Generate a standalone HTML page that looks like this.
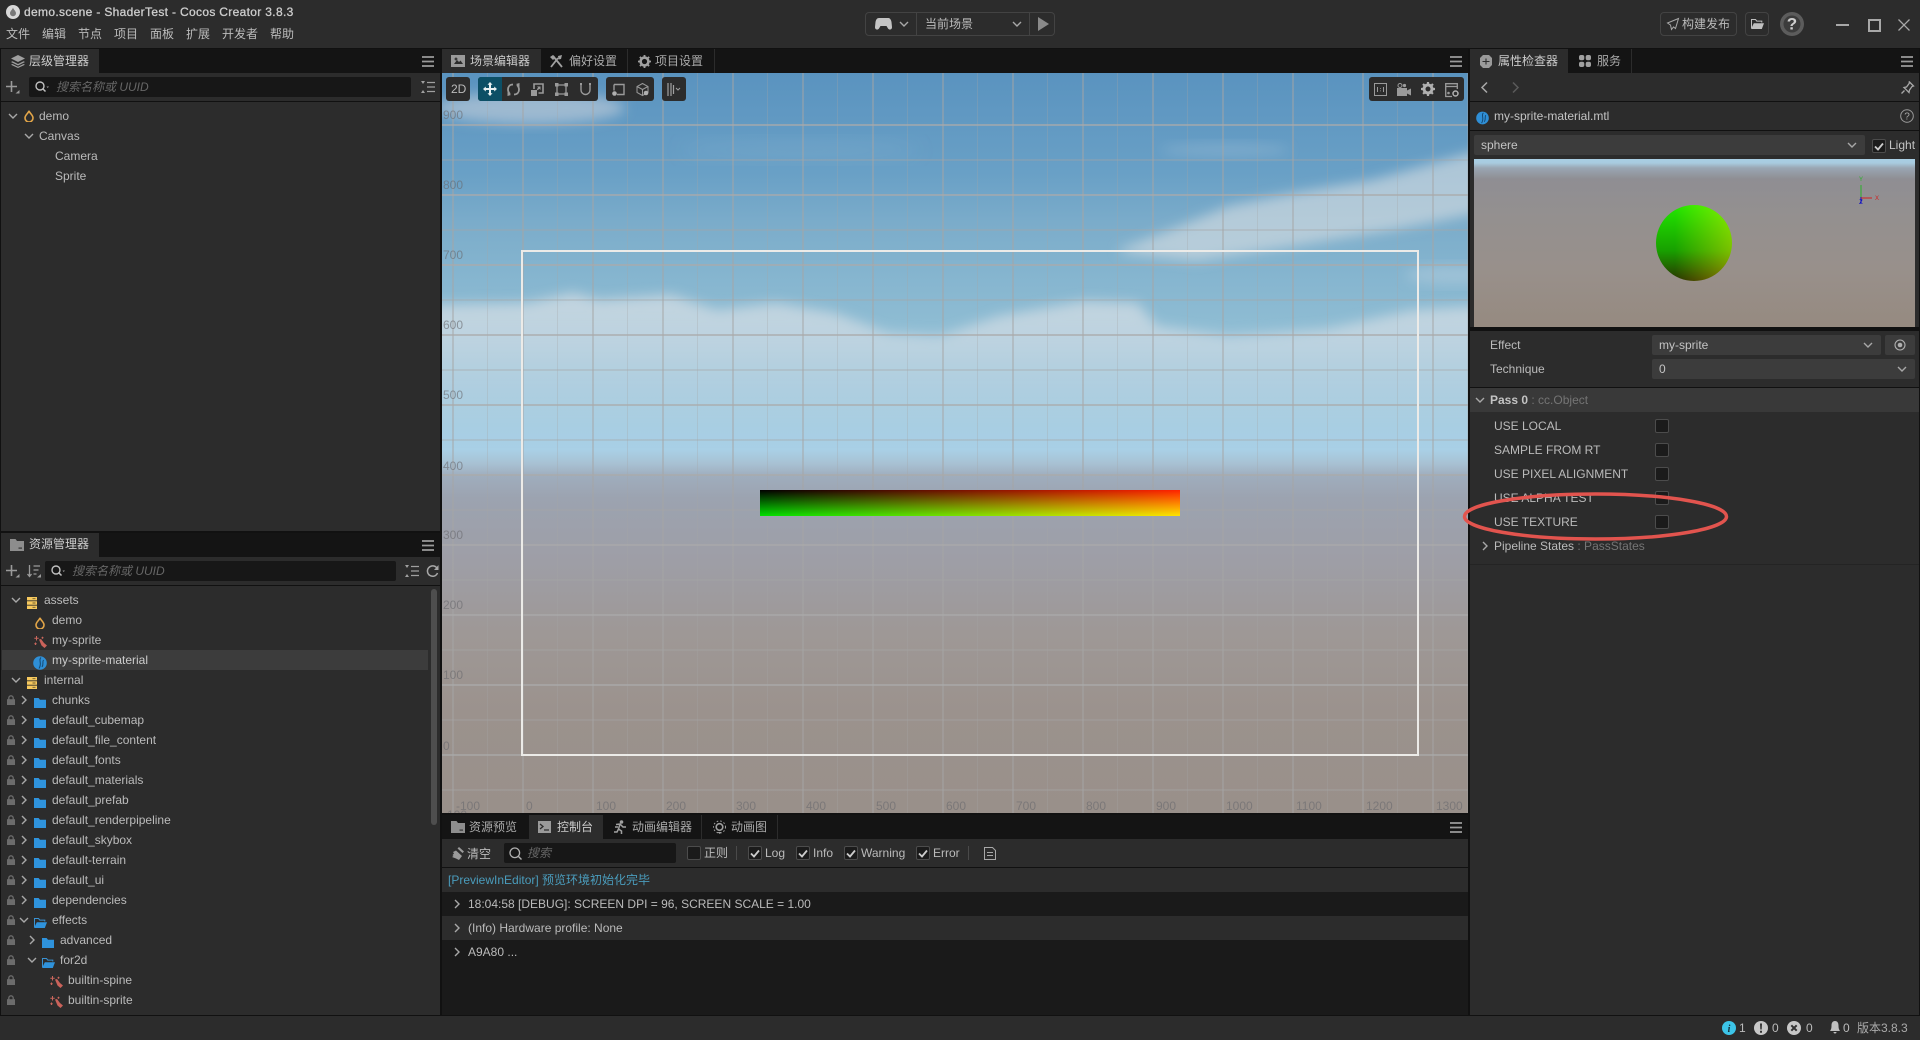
<!DOCTYPE html>
<html><head><meta charset="utf-8"><title>demo.scene - ShaderTest - Cocos Creator 3.8.3</title>
<style>
html,body{margin:0;padding:0;background:#111;width:1920px;height:1040px;overflow:hidden}
body{position:relative;font:12px/16px "Liberation Sans","Noto Sans CJK SC",sans-serif;color:#bbb}
.a,.t,.i{position:absolute}
.t{white-space:nowrap}
.i{overflow:visible}
.p{position:absolute;background:#2c2c2c}
.tb{position:absolute;background:#141414;height:24px}
.ph{color:#666;font-style:italic}
.g{color:#757575}
.b{position:absolute;background:#2c2c2c;border-radius:3px;top:77px;height:24px}
.sel{position:absolute;background:#3c3c3c;border-radius:2px;height:20px}
.cb{position:absolute;width:12px;height:12px;background:#1b1b1b;border:1px solid #4c4c4c;border-radius:2px}
.l{position:absolute;color:rgba(105,105,110,.62)}
.lb{position:absolute;top:798px}
</style></head><body>
<svg width="0" height="0" style="position:absolute">
<defs>
<symbol id="cd" viewBox="0 0 10 6"><path d="M1 1l4 4 4-4" fill="none" stroke="#a8a8a8" stroke-width="1.4"/></symbol>
<symbol id="cr" viewBox="0 0 6 10"><path d="M1 1l4 4-4 4" fill="none" stroke="#a8a8a8" stroke-width="1.4"/></symbol>
<symbol id="lock" viewBox="0 0 8 10"><path d="M0 4.200h8V10H0z" fill="#6c6c6c"/><path d="M1.800 4.500V3a2.200 2.200 0 0 1 4.400 0v1.500" fill="none" stroke="#6c6c6c" stroke-width="1.300"/></symbol>
<symbol id="fo" viewBox="0 0 12 10"><path d="M0 0h4.600l1.400 1.800h6V10H0z" fill="#2f93dc"/></symbol>
<symbol id="fopen" viewBox="0 0 13 10"><path d="M.5 9V.5h4l1.300 1.600h5v1.400" fill="none" stroke="#3a92d2"/><path d="M2.800 4.200H13L10.800 10H0z" fill="#2f93dc"/></symbol>
<symbol id="fopeng" viewBox="0 0 13 10"><path d="M.5 9V.5h4l1.300 1.600h5v1.400" fill="none" stroke="#c0c0c0"/><path d="M2.800 4.200H13L10.800 10H0z" fill="#c0c0c0"/></symbol>
<symbol id="db" viewBox="0 0 10 12"><path d="M0 0h10v3.400H0zM0 4.300h10v3.400H0zM0 8.600h10V12H0z" fill="#f6c95e"/><path d="M5.500 1.700h3M5.500 6h3M5.500 10.300h3" stroke="#6d5a2a" stroke-width=".9"/></symbol>
<symbol id="fl" viewBox="0 0 10 12"><path d="M5 .8C5.400 3 9 5 9 8a4 4 0 0 1-8 0c0-3 3.600-5 4-7.200z" fill="none" stroke="#e2a548" stroke-width="1.600"/></symbol>
<symbol id="fx" viewBox="0 0 13 12"><path d="M2.500 0v4.500M.3 2.200h4.400M1.500 6.500v2.500M.3 7.700h2.400M8.500 .8v2M7.500 1.800h2" stroke="#c9665c" fill="none"/><path d="M5 3.500L7 3l3 4 3 2.500L10.500 12 7.500 9.500z" fill="#c9625a"/></symbol>
<symbol id="mt" viewBox="0 0 14 14"><circle cx="7" cy="7" r="6.800" fill="#2f8fd6"/><path d="M8 1.500C5 4 9.500 7 6 12.500M10.500 4C9 6 11 8 9 11" fill="none" stroke="#15466e" stroke-width="1"/></symbol>
<symbol id="ham" viewBox="0 0 12 11"><path d="M0 1h12M0 5.500h12M0 10h12" stroke="#9a9a9a" stroke-width="1.800"/></symbol>
<symbol id="q" viewBox="0 0 14 12"><circle cx="5" cy="5" r="4" fill="none" stroke="#c0c0c0" stroke-width="1.400"/><path d="M8 8l2.500 2.500" stroke="#c0c0c0" stroke-width="1.500"/><path d="M11.500 5.500h2.500L12.700 7z" fill="#999"/></symbol>
<symbol id="plus" viewBox="0 0 14 13"><path d="M5.500 0v11M0 5.500h11" stroke="#9a9a9a" stroke-width="1.600"/><path d="M9.500 12.500h4V9z" fill="#9a9a9a"/></symbol>
<symbol id="lst" viewBox="0 0 14 12"><path d="M6 1.500h8M6 6h8M6 10.500h8" stroke="#a0a0a0" stroke-width="1.300"/><path d="M0 0h4L2 3zM0 12h4L2 9z" fill="#a0a0a0"/></symbol>
<symbol id="fg" viewBox="0 0 14 12"><path d="M0 0h5.500l1.500 2H14v10H0z" fill="#8d8d8d"/><path d="M8.500 8.500h3.500v1.200H8.500z" fill="#333"/></symbol>
</defs>
</svg>

<!-- title bar -->
<div class="a" style="left:0;top:0;width:1920px;height:48px;background:#2c2c2c"></div>
<svg class="i" style="left:6px;top:5px" width="14" height="14" viewBox="0 0 14 14"><circle cx="7" cy="7" r="7" fill="#d8d8d8"/><path d="M7 2.500C7.300 4.500 10 6 10 8.300a3 3 0 0 1-6 0C4 6 6.700 4.500 7 2.500z" fill="#777"/></svg>
<div class="t" style="left:24px;top:4px;color:#cdcdcd;letter-spacing:.33px;-webkit-text-stroke:.3px #cdcdcd">demo.scene - ShaderTest - Cocos Creator 3.8.3</div>
<div class="t" style="left:6px;top:26px">文件</div><div class="t" style="left:42px;top:26px">编辑</div><div class="t" style="left:78px;top:26px">节点</div><div class="t" style="left:114px;top:26px">项目</div><div class="t" style="left:150px;top:26px">面板</div><div class="t" style="left:186px;top:26px">扩展</div><div class="t" style="left:222px;top:26px">开发者</div><div class="t" style="left:270px;top:26px">帮助</div>

<div class="a" style="left:865px;top:12px;width:188px;height:22px;border:1px solid #434343;border-radius:4px"></div>
<div class="a" style="left:916px;top:13px;width:1px;height:22px;background:#434343"></div>
<div class="a" style="left:1029px;top:13px;width:1px;height:22px;background:#434343"></div>
<svg class="i" style="left:875px;top:18px" width="17" height="12" viewBox="0 0 17 12"><path d="M4 0h9c2 0 3 1.500 3.500 4l.5 5c.2 2.500-2.500 3.500-4 1.500L11.500 8h-6L4 10.500C2.500 12.500-.2 11.500 0 9l.5-5C1 1.500 2 0 4 0z" fill="#c4c4c4"/></svg>
<svg class="i" style="left:899px;top:21px" width="10" height="6"><use href="#cd"/></svg>
<div class="t" style="left:925px;top:16px">当前场景</div>
<svg class="i" style="left:1012px;top:21px" width="10" height="6"><use href="#cd"/></svg>
<svg class="i" style="left:1038px;top:17px" width="11" height="14"><path d="M0 0l11 7L0 14z" fill="#8a8a8a"/></svg>

<div class="a" style="left:1660px;top:12px;width:75px;height:22px;border:1px solid #434343;border-radius:4px"></div>
<svg class="i" style="left:1667px;top:18px" width="12" height="12" viewBox="0 0 12 12"><path d="M11.500.5L.5 5l3 2 1 4.500 2-2.500 2 1.500z" fill="none" stroke="#a8a8a8"/></svg>
<div class="t" style="left:1682px;top:16px">构建发布</div>
<div class="a" style="left:1745px;top:12px;width:22px;height:22px;border:1px solid #434343;border-radius:4px"></div>
<svg class="i" style="left:1751px;top:19px" width="13" height="10"><use href="#fopeng"/></svg>
<svg class="i" style="left:1780px;top:12px" width="24" height="24" viewBox="0 0 24 24"><circle cx="12" cy="12" r="12" fill="#5c5c5c"/><circle cx="12" cy="12" r="8.500" fill="#3c3c3c"/><text x="12" y="17.500" font-size="17" font-weight="bold" text-anchor="middle" fill="#cfcfcf" font-family="Liberation Sans">?</text></svg>
<div class="a" style="left:1836px;top:24px;width:13px;height:2px;background:#a8a8a8"></div>
<div class="a" style="left:1868px;top:19px;width:9px;height:9px;border:2px solid #a8a8a8"></div>
<svg class="i" style="left:1898px;top:19px" width="12" height="12"><path d="M.5.500l11 11M11.500.500l-11 11" stroke="#a8a8a8" stroke-width="1.300"/></svg>

<!-- hierarchy panel -->
<div class="p" style="left:1px;top:49px;width:439px;height:482px"></div>
<div class="tb" style="left:1px;top:49px;width:439px"></div>
<div class="a" style="left:1px;top:49px;width:98px;height:24px;background:#2c2c2c"></div>
<svg class="i" style="left:11px;top:55px" width="14" height="13" viewBox="0 0 14 13"><path d="M7 0l7 3.500-7 3.500L0 3.500z" fill="#a0a0a0"/><path d="M1.500 6.200L7 9l5.500-2.800L14 7l-7 3.500L0 7zM1.500 9L7 11.800 12.500 9l1.500.8L7 13 0 9.800z" fill="#a0a0a0"/></svg>
<div class="t" style="left:29px;top:53px;color:#ccc">层级管理器</div>
<svg class="i" style="left:422px;top:56px" width="12" height="11"><use href="#ham"/></svg>
<svg class="i" style="left:6px;top:81px" width="14" height="13"><use href="#plus"/></svg>
<div class="a" style="left:29px;top:77px;width:382px;height:20px;background:#171717;border-radius:2px"></div>
<svg class="i" style="left:35px;top:81px" width="14" height="12"><use href="#q"/></svg>
<div class="t ph" style="left:56px;top:79px">搜索名称或 UUID</div>
<svg class="i" style="left:421px;top:81px" width="14" height="12"><use href="#lst"/></svg>
<div class="a" style="left:1px;top:101px;width:439px;height:1px;background:#111"></div>
<svg class="i" style="left:8px;top:113px" width="10" height="6"><use href="#cd"/></svg>
<svg class="i" style="left:24px;top:110px" width="10" height="12"><use href="#fl"/></svg>
<div class="t" style="left:39px;top:108px">demo</div>
<svg class="i" style="left:24px;top:133px" width="10" height="6"><use href="#cd"/></svg>
<div class="t" style="left:39px;top:128px">Canvas</div>
<div class="t" style="left:55px;top:148px">Camera</div>
<div class="t" style="left:55px;top:168px">Sprite</div>

<!-- assets panel -->
<div class="p" style="left:1px;top:533px;width:439px;height:482px"></div>
<div class="tb" style="left:1px;top:533px;width:439px"></div>
<div class="a" style="left:1px;top:533px;width:98px;height:24px;background:#2c2c2c"></div>
<svg class="i" style="left:10px;top:539px" width="14" height="12"><use href="#fg"/></svg>
<div class="t" style="left:29px;top:536px;color:#ccc">资源管理器</div>
<svg class="i" style="left:422px;top:540px" width="12" height="11"><use href="#ham"/></svg>
<svg class="i" style="left:6px;top:565px" width="14" height="13"><use href="#plus"/></svg>
<svg class="i" style="left:27px;top:565px" width="14" height="13" viewBox="0 0 14 13"><path d="M2.500 0v11M.5 9l2 2.500L4.500 9M6.500 1H13M6.500 5h5M6.500 9h3" stroke="#9a9a9a" fill="none" stroke-width="1.300"/><path d="M10 12.500h4V9z" fill="#9a9a9a"/></svg>
<div class="a" style="left:45px;top:561px;width:351px;height:20px;background:#171717;border-radius:2px"></div>
<svg class="i" style="left:51px;top:565px" width="14" height="12"><use href="#q"/></svg>
<div class="t ph" style="left:72px;top:563px">搜索名称或 UUID</div>
<svg class="i" style="left:405px;top:565px" width="14" height="12"><use href="#lst"/></svg>
<svg class="i" style="left:426px;top:565px" width="13" height="13" viewBox="0 0 13 13"><path d="M11 3.200A5.200 5.200 0 1 0 11.500 8" fill="none" stroke="#a8a8a8" stroke-width="1.500"/><path d="M12.500 0v5h-4.500z" fill="#a8a8a8"/></svg>
<div class="a" style="left:1px;top:585px;width:439px;height:1px;background:#111"></div>
<div class="a" style="left:2px;top:650px;width:426px;height:20px;background:#3c3c3c"></div>
<div class="a" style="left:431px;top:589px;width:6px;height:236px;background:#4e4e4e;border-radius:3px"></div>

<svg class="i" style="left:11px;top:597px" width="10" height="6"><use href="#cd"/></svg>
<svg class="i" style="left:27px;top:597px" width="10" height="12"><use href="#db"/></svg>
<div class="t" style="left:44px;top:592px">assets</div>
<svg class="i" style="left:35px;top:617px" width="10" height="12"><use href="#fl"/></svg>
<div class="t" style="left:52px;top:612px">demo</div>
<svg class="i" style="left:34px;top:636px" width="13" height="12"><use href="#fx"/></svg>
<div class="t" style="left:52px;top:632px">my-sprite</div>
<svg class="i" style="left:33px;top:656px" width="14" height="14"><use href="#mt"/></svg>
<div class="t" style="left:52px;top:652px;color:#ccc">my-sprite-material</div>
<svg class="i" style="left:11px;top:677px" width="10" height="6"><use href="#cd"/></svg>
<svg class="i" style="left:27px;top:677px" width="10" height="12"><use href="#db"/></svg>
<div class="t" style="left:44px;top:672px">internal</div>

<svg class="i" style="left:7px;top:695px" width="8" height="10"><use href="#lock"/></svg><svg class="i" style="left:21px;top:695px" width="6" height="10"><use href="#cr"/></svg><svg class="i" style="left:34px;top:698px" width="12" height="10"><use href="#fo"/></svg><div class="t" style="left:52px;top:692px">chunks</div>
<svg class="i" style="left:7px;top:715px" width="8" height="10"><use href="#lock"/></svg><svg class="i" style="left:21px;top:715px" width="6" height="10"><use href="#cr"/></svg><svg class="i" style="left:34px;top:718px" width="12" height="10"><use href="#fo"/></svg><div class="t" style="left:52px;top:712px">default_cubemap</div>
<svg class="i" style="left:7px;top:735px" width="8" height="10"><use href="#lock"/></svg><svg class="i" style="left:21px;top:735px" width="6" height="10"><use href="#cr"/></svg><svg class="i" style="left:34px;top:738px" width="12" height="10"><use href="#fo"/></svg><div class="t" style="left:52px;top:732px">default_file_content</div>
<svg class="i" style="left:7px;top:755px" width="8" height="10"><use href="#lock"/></svg><svg class="i" style="left:21px;top:755px" width="6" height="10"><use href="#cr"/></svg><svg class="i" style="left:34px;top:758px" width="12" height="10"><use href="#fo"/></svg><div class="t" style="left:52px;top:752px">default_fonts</div>
<svg class="i" style="left:7px;top:775px" width="8" height="10"><use href="#lock"/></svg><svg class="i" style="left:21px;top:775px" width="6" height="10"><use href="#cr"/></svg><svg class="i" style="left:34px;top:778px" width="12" height="10"><use href="#fo"/></svg><div class="t" style="left:52px;top:772px">default_materials</div>
<svg class="i" style="left:7px;top:795px" width="8" height="10"><use href="#lock"/></svg><svg class="i" style="left:21px;top:795px" width="6" height="10"><use href="#cr"/></svg><svg class="i" style="left:34px;top:798px" width="12" height="10"><use href="#fo"/></svg><div class="t" style="left:52px;top:792px">default_prefab</div>
<svg class="i" style="left:7px;top:815px" width="8" height="10"><use href="#lock"/></svg><svg class="i" style="left:21px;top:815px" width="6" height="10"><use href="#cr"/></svg><svg class="i" style="left:34px;top:818px" width="12" height="10"><use href="#fo"/></svg><div class="t" style="left:52px;top:812px">default_renderpipeline</div>
<svg class="i" style="left:7px;top:835px" width="8" height="10"><use href="#lock"/></svg><svg class="i" style="left:21px;top:835px" width="6" height="10"><use href="#cr"/></svg><svg class="i" style="left:34px;top:838px" width="12" height="10"><use href="#fo"/></svg><div class="t" style="left:52px;top:832px">default_skybox</div>
<svg class="i" style="left:7px;top:855px" width="8" height="10"><use href="#lock"/></svg><svg class="i" style="left:21px;top:855px" width="6" height="10"><use href="#cr"/></svg><svg class="i" style="left:34px;top:858px" width="12" height="10"><use href="#fo"/></svg><div class="t" style="left:52px;top:852px">default-terrain</div>
<svg class="i" style="left:7px;top:875px" width="8" height="10"><use href="#lock"/></svg><svg class="i" style="left:21px;top:875px" width="6" height="10"><use href="#cr"/></svg><svg class="i" style="left:34px;top:878px" width="12" height="10"><use href="#fo"/></svg><div class="t" style="left:52px;top:872px">default_ui</div>
<svg class="i" style="left:7px;top:895px" width="8" height="10"><use href="#lock"/></svg><svg class="i" style="left:21px;top:895px" width="6" height="10"><use href="#cr"/></svg><svg class="i" style="left:34px;top:898px" width="12" height="10"><use href="#fo"/></svg><div class="t" style="left:52px;top:892px">dependencies</div>
<svg class="i" style="left:7px;top:915px" width="8" height="10"><use href="#lock"/></svg><svg class="i" style="left:19px;top:917px" width="10" height="6"><use href="#cd"/></svg><svg class="i" style="left:34px;top:918px" width="13" height="10"><use href="#fopen"/></svg><div class="t" style="left:52px;top:912px">effects</div>
<svg class="i" style="left:7px;top:935px" width="8" height="10"><use href="#lock"/></svg><svg class="i" style="left:29px;top:935px" width="6" height="10"><use href="#cr"/></svg><svg class="i" style="left:42px;top:938px" width="12" height="10"><use href="#fo"/></svg><div class="t" style="left:60px;top:932px">advanced</div>
<svg class="i" style="left:7px;top:955px" width="8" height="10"><use href="#lock"/></svg><svg class="i" style="left:27px;top:957px" width="10" height="6"><use href="#cd"/></svg><svg class="i" style="left:42px;top:958px" width="13" height="10"><use href="#fopen"/></svg><div class="t" style="left:60px;top:952px">for2d</div>
<svg class="i" style="left:7px;top:975px" width="8" height="10"><use href="#lock"/></svg><svg class="i" style="left:50px;top:976px" width="13" height="12"><use href="#fx"/></svg><div class="t" style="left:68px;top:972px">builtin-spine</div>
<svg class="i" style="left:7px;top:995px" width="8" height="10"><use href="#lock"/></svg><svg class="i" style="left:50px;top:996px" width="13" height="12"><use href="#fx"/></svg><div class="t" style="left:68px;top:992px">builtin-sprite</div>

<!-- scene header -->
<div class="tb" style="left:442px;top:49px;width:1026px"></div>
<div class="a" style="left:442px;top:49px;width:98px;height:24px;background:#2c2c2c"></div>
<div class="a" style="left:627px;top:49px;width:1px;height:24px;background:#2c2c2c"></div>
<div class="a" style="left:714px;top:49px;width:1px;height:24px;background:#2c2c2c"></div>
<div class="a" style="left:540px;top:49px;width:1px;height:24px;background:#2c2c2c"></div>
<svg class="i" style="left:451px;top:55px" width="14" height="12" viewBox="0 0 14 12"><path d="M0 0h14v12H0z" fill="#9a9a9a"/><path d="M3 9l3-4 2 2 1.500-1.500L12 9zM5 2l.7 1.300L7 4l-1.300.7L5 6l-.7-1.300L3 4l1.300-.7z" fill="#2c2c2c"/></svg>
<div class="t" style="left:470px;top:53px;color:#ccc">场景编辑器</div>
<svg class="i" style="left:550px;top:55px" width="13" height="13" viewBox="0 0 13 13"><path d="M1 12L8 3M3 1l9 11" stroke="#a0a0a0" stroke-width="1.800" fill="none"/><path d="M0 2l3-2 2.500 2.500L3 5zM8 1l4-1-1 4-2.500.5z" fill="#a0a0a0"/></svg>
<div class="t" style="left:569px;top:53px;color:#aaa">偏好设置</div>
<svg class="i" style="left:638px;top:55px" width="13" height="13" viewBox="0 0 14 14"><circle cx="7" cy="7" r="4.200" fill="none" stroke="#a0a0a0" stroke-width="2.800"/><path d="M7 0v14M0 7h14M2 2l10 10M12 2L2 12" stroke="#a0a0a0" stroke-width="2" stroke-dasharray="2.500 9"/></svg>
<div class="t" style="left:655px;top:53px;color:#aaa">项目设置</div>
<svg class="i" style="left:1450px;top:56px" width="12" height="11"><use href="#ham"/></svg>

<!-- scene view -->
<div class="a" id="sv" style="left:442px;top:73px;width:1026px;height:740px;overflow:hidden;background:linear-gradient(to bottom,#5a93bf 0,#69a0c6 100px,#7bacca 150px,#83b3ce 190px,#8ebcd3 250px,#a4cbe0 340px,#a9d0e6 377px,#a8c2d4 390px,#9fadbd 403px,#9ca3b0 425px,#9e9ea6 490px,#9e9896 560px,#9b928d 640px,#99908a 740px)">
<svg width="1026" height="740" viewBox="442 73 1026 740" style="position:absolute;left:0;top:0">
<defs>
<filter id="bl" x="-10%" y="-30%" width="120%" height="160%"><feGaussianBlur stdDeviation="6"/></filter>
<filter id="bl2" x="-20%" y="-50%" width="140%" height="200%"><feGaussianBlur stdDeviation="10"/></filter>
<linearGradient id="cg" x1="0" y1="290" x2="0" y2="440" gradientUnits="userSpaceOnUse"><stop offset="0" stop-color="#dfe2e6" stop-opacity=".7"/><stop offset=".35" stop-color="#d6dfe6" stop-opacity=".62"/><stop offset=".7" stop-color="#c4d8e4" stop-opacity=".38"/><stop offset="1" stop-color="#b8d4e4" stop-opacity="0"/></linearGradient>
</defs>
<path filter="url(#bl)" fill="url(#cg)" d="M430 305L527 303L573 293L599 300L671 295L717 310L776 303L835 313L888 333L940 336L999 316L1085 301L1137 303L1157 326L1229 336L1327 329L1413 310L1480 306V440H430z"/>
<path filter="url(#bl)" fill="#d4dce2" fill-opacity=".64" d="M1117 250L1163 233L1229 206L1294 193L1373 180L1480 150V213L1393 230L1294 246L1196 261L1124 253z"/>
<ellipse filter="url(#bl)" cx="1455" cy="275" rx="50" ry="10" fill="#c0d4e0" fill-opacity=".4"/>
<ellipse filter="url(#bl)" cx="530" cy="108" rx="95" ry="16" fill="#d0d6dc" fill-opacity=".55"/>
<ellipse filter="url(#bl)" cx="1225" cy="150" rx="65" ry="7" fill="#bcd0de" fill-opacity=".25"/>
<ellipse filter="url(#bl2)" cx="800" cy="150" rx="120" ry="8" fill="#b6cede" fill-opacity=".15"/>
</svg>
<!-- grid -->
<div class="a" style="left:10px;top:0;right:0;bottom:0;background:repeating-linear-gradient(to right,rgba(165,165,165,.48) 0 2px,transparent 2px 70px)"></div>
<div class="a" style="left:45px;top:0;right:0;bottom:0;background:repeating-linear-gradient(to right,rgba(165,165,165,.3) 0 1px,transparent 1px 70px)"></div>
<div class="a" style="left:0;top:51px;right:0;bottom:0;background:repeating-linear-gradient(to bottom,rgba(170,170,170,.68) 0 2px,transparent 2px 70px)"></div>
<div class="a" style="left:0;top:86px;right:0;bottom:0;background:repeating-linear-gradient(to bottom,rgba(165,165,165,.34) 0 2px,transparent 2px 70px)"></div>
<!-- labels -->
<div class="l" style="left:1px;top:34px">900</div><div class="l" style="left:1px;top:104px">800</div><div class="l" style="left:1px;top:174px">700</div><div class="l" style="left:1px;top:244px">600</div><div class="l" style="left:1px;top:314px">500</div><div class="l" style="left:1px;top:385px">400</div><div class="l" style="left:1px;top:454px">300</div><div class="l" style="left:1px;top:524px">200</div><div class="l" style="left:1px;top:594px">100</div><div class="l" style="left:1px;top:665px">0</div><div class="l" style="left:1px;top:734px">-100</div>
<div class="l" style="left:14px;top:725px">-100</div><div class="l" style="left:84px;top:725px">0</div><div class="l" style="left:154px;top:725px">100</div><div class="l" style="left:224px;top:725px">200</div><div class="l" style="left:294px;top:725px">300</div><div class="l" style="left:364px;top:725px">400</div><div class="l" style="left:434px;top:725px">500</div><div class="l" style="left:504px;top:725px">600</div><div class="l" style="left:574px;top:725px">700</div><div class="l" style="left:644px;top:725px">800</div><div class="l" style="left:714px;top:725px">900</div><div class="l" style="left:784px;top:725px">1000</div><div class="l" style="left:854px;top:725px">1100</div><div class="l" style="left:924px;top:725px">1200</div><div class="l" style="left:994px;top:725px">1300</div>
<!-- canvas rect -->
<div class="a" style="left:79px;top:177px;width:894px;height:502px;border:2px solid #ecebe8"></div>
<!-- sprite -->
<div class="a" style="left:318px;top:417px;width:420px;height:26px;background:linear-gradient(to bottom,#000 0,#00e000 100%),linear-gradient(to right,#000,#ff2200);background-blend-mode:screen"></div>
</div>

<!-- scene toolbars -->
<div class="b" style="left:446px;width:24px"></div>
<div class="t" style="left:451px;top:81px;color:#bbb;font-size:12px">2D</div>
<div class="b" style="left:478px;width:120px"></div>
<div class="a" style="left:478px;top:77px;width:24px;height:24px;background:#0c4f66;border-radius:3px 0 0 3px"></div>
<svg class="i" style="left:483px;top:82px" width="14" height="14" viewBox="0 0 14 14"><path d="M7 0l2.500 2.800H8V6h3.200V4.500L14 7l-2.800 2.500V8H8v3.200h1.500L7 14l-2.500-2.800H6V8H2.800v1.500L0 7l2.800-2.500V6H6V2.800H4.500z" fill="#e8f0f2"/></svg>
<svg class="i" style="left:507px;top:83px" width="13" height="13" viewBox="0 0 13 13"><path d="M6 1.500C2.500 1.500 1 4 1 6.500c0 2 1 3.500 2 4.500M7 11.500c3.500 0 5-2.500 5-5 0-2-1-3.500-2-4.500" fill="none" stroke="#9a9a9a" stroke-width="1.800"/><path d="M12.500 0v4L9 1zM.5 13V9l3.500 3z" fill="#9a9a9a"/></svg>
<svg class="i" style="left:531px;top:83px" width="13" height="13" viewBox="0 0 13 13"><path d="M3 6V1h9v9H7.500" fill="none" stroke="#9a9a9a" stroke-width="1.600"/><path d="M0 7h6v6H0zM6 3.500h3.500V7L8.300 5.800 6.800 7.300 5.700 6.200 7.200 4.700z" fill="#9a9a9a"/></svg>
<svg class="i" style="left:555px;top:83px" width="13" height="13" viewBox="0 0 13 13"><path d="M2 2h9v9H2z" fill="none" stroke="#9a9a9a" stroke-width="1.300"/><path d="M0 0h3.500v3.500H0zM9.500 0H13v3.500H9.500zM0 9.500h3.500V13H0zM9.500 9.500H13V13H9.500z" fill="#9a9a9a"/></svg>
<svg class="i" style="left:580px;top:83px" width="11" height="13" viewBox="0 0 11 13"><path d="M1 0v7a4.500 4.500 0 0 0 9 0V0" fill="none" stroke="#9a9a9a" stroke-width="1.400"/><path d="M0 1h2M9 1h2" stroke="#9a9a9a" stroke-width="2"/></svg>
<div class="b" style="left:606px;width:48px"></div>
<svg class="i" style="left:612px;top:83px" width="13" height="13" viewBox="0 0 13 13"><path d="M2 1.500h10v10H5" fill="none" stroke="#9a9a9a" stroke-width="1.400"/><path d="M2 1.500v6" stroke="#9a9a9a" stroke-width="1.400"/><circle cx="2.500" cy="10.500" r="2.300" fill="#b0b0b0"/></svg>
<svg class="i" style="left:636px;top:83px" width="13" height="13" viewBox="0 0 13 13"><path d="M6.500.5l5.500 3v6l-5.500 3-5.500-3v-6zM1 3.500l5.500 3 5.500-3M6.500 6.500V12" fill="none" stroke="#9a9a9a"/><circle cx="10" cy="10" r="2.300" fill="#b0b0b0"/></svg>
<div class="b" style="left:662px;width:24px"></div>
<svg class="i" style="left:667px;top:83px" width="14" height="13" viewBox="0 0 14 13"><path d="M1 0v13M4 0v13M6.500 2v9" stroke="#a0a0a0" stroke-width="1.200"/><path d="M9 5l2 2 2-2" stroke="#a0a0a0" fill="none"/></svg>
<div class="b" style="left:1369px;width:95px"></div>
<svg class="i" style="left:1374px;top:83px" width="13" height="13" viewBox="0 0 13 13"><path d="M.5.500h12v12H.5z" fill="none" stroke="#9a9a9a"/><path d="M3.500 4v5M9.500 4v5M6.500 5v.8M6.500 7.500v.8" stroke="#9a9a9a"/></svg>
<svg class="i" style="left:1397px;top:83px" width="14" height="13" viewBox="0 0 14 13"><path d="M0 5h10v8H0zM10 7.500l4-2v7l-4-2z" fill="#9a9a9a"/><circle cx="3" cy="2.500" r="2" fill="none" stroke="#9a9a9a"/><circle cx="7.500" cy="2.500" r="1.600" fill="#9a9a9a"/></svg>
<svg class="i" style="left:1421px;top:82px" width="14" height="14" viewBox="0 0 14 14"><circle cx="7" cy="7" r="4" fill="none" stroke="#b0b0b0" stroke-width="3"/><path d="M7 0v14M0 7h14M2 2l10 10M12 2L2 12" stroke="#b0b0b0" stroke-width="2.200" stroke-dasharray="2.500 9"/></svg>
<svg class="i" style="left:1445px;top:83px" width="14" height="14" viewBox="0 0 14 14"><path d="M7 13.500H.7V.7h11.600V6M.7 3.500h11.600" fill="none" stroke="#9a9a9a" stroke-width="1.300"/><circle cx="10.500" cy="10.500" r="2.500" fill="none" stroke="#b0b0b0" stroke-width="1.500"/><circle cx="3.500" cy="10" r="1.300" fill="#9a9a9a"/></svg>

<!-- console -->
<div class="tb" style="left:442px;top:815px;width:1026px"></div>
<div class="a" style="left:529px;top:815px;width:74px;height:24px;background:#2c2c2c"></div>
<div class="a" style="left:701px;top:815px;width:1px;height:24px;background:#2c2c2c"></div>
<div class="a" style="left:777px;top:815px;width:1px;height:24px;background:#2c2c2c"></div>
<svg class="i" style="left:451px;top:821px" width="14" height="12"><use href="#fg"/></svg>
<div class="t" style="left:469px;top:819px;color:#aaa">资源预览</div>
<svg class="i" style="left:538px;top:821px" width="13" height="12" viewBox="0 0 13 12"><path d="M0 0h13v12H0z" fill="#9a9a9a"/><path d="M2 3l3 2.500L2 8M6 9h5" fill="none" stroke="#2c2c2c" stroke-width="1.300"/></svg>
<div class="t" style="left:557px;top:819px;color:#ccc">控制台</div>
<svg class="i" style="left:613px;top:820px" width="13" height="14" viewBox="0 0 13 14"><circle cx="8.500" cy="2" r="1.800" fill="#a0a0a0"/><path d="M3 4.500l4-.5 3 3h3M7 4L5.500 9l3 2v3M5.500 9L4 12H1M2 7h3" fill="none" stroke="#a0a0a0" stroke-width="1.500"/></svg>
<div class="t" style="left:632px;top:819px;color:#aaa">动画编辑器</div>
<svg class="i" style="left:713px;top:820px" width="13" height="14" viewBox="0 0 13 14"><circle cx="6.500" cy="7" r="3.300" fill="none" stroke="#a0a0a0" stroke-width="1.600"/><circle cx="6.500" cy="7" r="6" fill="none" stroke="#a0a0a0" stroke-dasharray="1.600 2"/><path d="M4.500 12l2 2 2-2z" fill="#a0a0a0"/></svg>
<div class="t" style="left:731px;top:819px;color:#aaa">动画图</div>
<svg class="i" style="left:1450px;top:822px" width="12" height="11"><use href="#ham"/></svg>

<div class="p" style="left:442px;top:839px;width:1026px;height:28px"></div>
<svg class="i" style="left:452px;top:847px" width="13" height="13" viewBox="0 0 13 13"><path d="M7 0l5 4.500-1.500 1.500-5-4.500zM4 3.500L10 9l-3 4-3-1.500-4-1.500 1.500-1L.5 8 2 6.500 1 5z" fill="#9a9a9a"/></svg>
<div class="t" style="left:467px;top:846px">清空</div>
<div class="a" style="left:504px;top:843px;width:172px;height:20px;background:#171717;border-radius:2px"></div>
<svg class="i" style="left:509px;top:847px" width="13" height="13" viewBox="0 0 13 13"><circle cx="5.800" cy="5.800" r="4.800" fill="none" stroke="#b0b0b0" stroke-width="1.300"/><path d="M9.500 9.500l3 3" stroke="#b0b0b0" stroke-width="1.400"/></svg>
<div class="t ph" style="left:527px;top:845px">搜索</div>
<div class="cb" style="left:687px;top:846px"></div><div class="t" style="left:704px;top:845px">正则</div>
<div class="a" style="left:736px;top:846px;width:1px;height:14px;background:#4a4a4a"></div>
<div class="cb" style="left:748px;top:846px"></div><svg class="i" style="left:750px;top:849px" width="10" height="9"><path d="M1 4.500l3 3 5-6" fill="none" stroke="#ccc" stroke-width="1.800"/></svg><div class="t" style="left:765px;top:845px">Log</div>
<div class="cb" style="left:796px;top:846px"></div><svg class="i" style="left:798px;top:849px" width="10" height="9"><path d="M1 4.500l3 3 5-6" fill="none" stroke="#ccc" stroke-width="1.800"/></svg><div class="t" style="left:813px;top:845px">Info</div>
<div class="cb" style="left:844px;top:846px"></div><svg class="i" style="left:846px;top:849px" width="10" height="9"><path d="M1 4.500l3 3 5-6" fill="none" stroke="#ccc" stroke-width="1.800"/></svg><div class="t" style="left:861px;top:845px">Warning</div>
<div class="cb" style="left:916px;top:846px"></div><svg class="i" style="left:918px;top:849px" width="10" height="9"><path d="M1 4.500l3 3 5-6" fill="none" stroke="#ccc" stroke-width="1.800"/></svg><div class="t" style="left:933px;top:845px">Error</div>
<div class="a" style="left:968px;top:846px;width:1px;height:14px;background:#4a4a4a"></div>
<svg class="i" style="left:984px;top:847px" width="12" height="13" viewBox="0 0 12 13"><path d="M.5.500h8l3 3v9H.5zM3 5.500h6M3 8.500h6" fill="none" stroke="#a8a8a8"/></svg>
<div class="a" style="left:442px;top:868px;width:1026px;height:147px;background:#1a1a1a"></div>
<div class="a" style="left:442px;top:868px;width:1026px;height:24px;background:#2c2c2c"></div>
<div class="t" style="left:448px;top:872px;color:#4a9cbc">[PreviewInEditor] 预览环境初始化完毕</div>
<svg class="i" style="left:454px;top:899px" width="6" height="10"><use href="#cr"/></svg>
<div class="t" style="left:468px;top:896px">18:04:58 [DEBUG]: SCREEN DPI = 96, SCREEN SCALE = 1.00</div>
<div class="a" style="left:442px;top:916px;width:1026px;height:24px;background:#2c2c2c"></div>
<svg class="i" style="left:454px;top:923px" width="6" height="10"><use href="#cr"/></svg>
<div class="t" style="left:468px;top:920px">(Info) Hardware profile: None</div>
<svg class="i" style="left:454px;top:947px" width="6" height="10"><use href="#cr"/></svg>
<div class="t" style="left:468px;top:944px">A9A80 ...</div>

<!-- inspector -->
<div class="p" style="left:1470px;top:49px;width:449px;height:966px"></div>
<div class="tb" style="left:1470px;top:49px;width:449px"></div>
<div class="a" style="left:1470px;top:49px;width:98px;height:24px;background:#2c2c2c"></div>
<div class="a" style="left:1631px;top:49px;width:1px;height:24px;background:#2c2c2c"></div>
<svg class="i" style="left:1480px;top:55px" width="12" height="13" viewBox="0 0 12 13"><path d="M3 0h6l3 3v7l-3 3H3L0 10V3z" fill="#9a9a9a"/><path d="M2.500 6.500h7M6 3.500v6" stroke="#2c2c2c" stroke-width="1.100"/></svg>
<div class="t" style="left:1498px;top:53px;color:#ccc">属性检查器</div>
<svg class="i" style="left:1579px;top:55px" width="12" height="12" viewBox="0 0 12 12"><rect width="5.300" height="5.300" rx="2" fill="#a0a0a0"/><rect x="6.700" width="5.300" height="5.300" rx="2" fill="#a0a0a0"/><rect y="6.700" width="5.300" height="5.300" rx="2" fill="#a0a0a0"/><rect x="6.700" y="6.700" width="5.300" height="5.300" rx="2" fill="#a0a0a0"/></svg>
<div class="t" style="left:1597px;top:53px;color:#aaa">服务</div>
<svg class="i" style="left:1901px;top:56px" width="12" height="11"><use href="#ham"/></svg>
<svg class="i" style="left:1481px;top:82px" width="7" height="11" viewBox="0 0 7 11"><path d="M6 .5l-5 5 5 5" fill="none" stroke="#a8a8a8" stroke-width="1.500"/></svg>
<svg class="i" style="left:1512px;top:82px" width="7" height="11" viewBox="0 0 7 11"><path d="M1 .5l5 5-5 5" fill="none" stroke="#5a5a5a" stroke-width="1.500"/></svg>
<svg class="i" style="left:1901px;top:81px" width="13" height="13" viewBox="0 0 13 13"><path d="M8 .5l4.500 4.500-1.500.5-2.500 3.500-.5 2.500-5-5 2.500-.5L8.500 2z" fill="none" stroke="#a8a8a8" stroke-width="1.300"/><path d="M3.500 9.500L.5 12.500" stroke="#a8a8a8" stroke-width="1.300"/></svg>
<div class="a" style="left:1470px;top:101px;width:449px;height:1px;background:#111"></div>
<svg class="i" style="left:1476px;top:111px" width="13" height="14"><use href="#mt"/></svg>
<div class="t" style="left:1494px;top:108px;color:#c4c4c4">my-sprite-material.mtl</div>
<svg class="i" style="left:1900px;top:109px" width="14" height="14" viewBox="0 0 14 14"><circle cx="7" cy="7" r="6.300" fill="none" stroke="#9a9a9a"/><text x="7" y="10.500" font-size="10" text-anchor="middle" fill="#a8a8a8" font-family="Liberation Sans">?</text></svg>
<div class="a" style="left:1470px;top:130px;width:449px;height:1px;background:#111"></div>
<div class="sel" style="left:1474px;top:135px;width:391px"></div>
<div class="t" style="left:1481px;top:137px;color:#c4c4c4">sphere</div>
<svg class="i" style="left:1847px;top:142px" width="10" height="6"><use href="#cd"/></svg>
<div class="cb" style="left:1872px;top:139px"></div><svg class="i" style="left:1874px;top:142px" width="10" height="9"><path d="M1 4.500l3 3 5-6" fill="none" stroke="#ccc" stroke-width="1.800"/></svg>
<div class="t" style="left:1889px;top:137px;color:#c4c4c4">Light</div>
<div class="a" style="left:1474px;top:159px;width:441px;height:168px;overflow:hidden;background:linear-gradient(to bottom,#a9cfe4 0,#a8cbdf 4px,#9aa6b3 9px,#8f8e93 20px,#94908f 60px,#98908b 110px,#968a80 168px)">
<div class="a" style="left:182px;top:46px;width:76px;height:76px;border-radius:50%;background:linear-gradient(to bottom,#22e800 0,#18a000 60%,#2a3200 100%),linear-gradient(to right,#000 0,#000 25%,#6e5800 100%);background-blend-mode:screen"></div>
<svg width="441" height="168" viewBox="1474 159 441 168" style="position:absolute;left:0;top:0"><path d="M1861 185v13" stroke="#2ab02a"/><path d="M1861 197v6" stroke="#0000c8"/><path d="M1861 198h11" stroke="#d02020"/><text x="1877" y="200" font-size="6" fill="#d02020" text-anchor="middle" font-family="Liberation Sans">X</text><text x="1861" y="181" font-size="6" fill="#2ab02a" text-anchor="middle" font-family="Liberation Sans">Y</text><text x="1861" y="204" font-size="6" fill="#0000c8" text-anchor="middle" font-family="Liberation Sans">Z</text></svg>
</div>
<div class="a" style="left:1470px;top:327px;width:449px;height:4px;background:#111"></div>
<div class="t" style="left:1490px;top:337px">Effect</div>
<div class="sel" style="left:1652px;top:335px;width:229px"></div>
<div class="t" style="left:1659px;top:337px;color:#c4c4c4">my-sprite</div>
<svg class="i" style="left:1863px;top:342px" width="10" height="6"><use href="#cd"/></svg>
<div class="sel" style="left:1885px;top:335px;width:30px"></div>
<svg class="i" style="left:1894px;top:339px" width="12" height="12" viewBox="0 0 12 12"><circle cx="6" cy="6" r="5" fill="none" stroke="#b0b0b0" stroke-width="1.100"/><circle cx="6" cy="6" r="2.300" fill="#b0b0b0"/></svg>
<div class="t" style="left:1490px;top:361px">Technique</div>
<div class="sel" style="left:1652px;top:359px;width:263px"></div>
<div class="t" style="left:1659px;top:361px;color:#c4c4c4">0</div>
<svg class="i" style="left:1897px;top:366px" width="10" height="6"><use href="#cd"/></svg>
<div class="a" style="left:1470px;top:387px;width:449px;height:1px;background:#111"></div>
<div class="a" style="left:1470px;top:388px;width:449px;height:24px;background:#393939"></div>
<svg class="i" style="left:1475px;top:397px" width="10" height="6"><use href="#cd"/></svg>
<div class="t" style="left:1490px;top:392px"><b style="color:#c4c4c4">Pass 0</b> <span class="g">: cc.Object</span></div>
<div class="t" style="left:1494px;top:418px">USE LOCAL</div>
<div class="t" style="left:1494px;top:442px">SAMPLE FROM RT</div>
<div class="t" style="left:1494px;top:466px">USE PIXEL ALIGNMENT</div>
<div class="t" style="left:1494px;top:490px">USE ALPHA TEST</div>
<div class="t" style="left:1494px;top:514px">USE TEXTURE</div>
<div class="cb" style="left:1655px;top:419px"></div>
<div class="cb" style="left:1655px;top:443px"></div>
<div class="cb" style="left:1655px;top:467px"></div>
<div class="cb" style="left:1655px;top:491px"></div>
<div class="cb" style="left:1655px;top:515px"></div>
<svg class="i" style="left:1482px;top:541px" width="6" height="10"><use href="#cr"/></svg>
<div class="t" style="left:1494px;top:538px">Pipeline States <span class="g">: PassStates</span></div>
<div class="a" style="left:1470px;top:564px;width:449px;height:1px;background:#242424"></div>
<svg class="i" style="left:1455px;top:485px;overflow:visible" width="290" height="65" viewBox="1455 485 290 65"><ellipse cx="1595.500" cy="516.500" rx="131" ry="22.500" fill="none" stroke="#e2544e" stroke-width="3.500"/></svg>

<!-- status bar -->
<div class="a" style="left:0;top:1016px;width:1920px;height:24px;background:#2c2c2c"></div>
<svg class="i" style="left:1722px;top:1021px" width="14" height="14" viewBox="0 0 14 14"><circle cx="7" cy="7" r="7" fill="#3cc4e8"/><text x="7" y="11" font-size="10" font-weight="bold" font-style="italic" text-anchor="middle" fill="#16303a" font-family="Liberation Serif">i</text></svg>
<div class="t" style="left:1739px;top:1020px">1</div>
<svg class="i" style="left:1754px;top:1021px" width="14" height="14" viewBox="0 0 14 14"><circle cx="7" cy="7" r="7" fill="#c8c8c8"/><path d="M6 2.500h2L7.700 8.500H6.300zM6 9.800h2v2H6z" fill="#333"/></svg>
<div class="t" style="left:1772px;top:1020px">0</div>
<svg class="i" style="left:1787px;top:1021px" width="14" height="14" viewBox="0 0 14 14"><circle cx="7" cy="7" r="7" fill="#c8c8c8"/><path d="M4.300 4.300l5.400 5.400M9.700 4.300l-5.400 5.400" stroke="#333" stroke-width="2"/></svg>
<div class="t" style="left:1806px;top:1020px">0</div>
<svg class="i" style="left:1830px;top:1021px" width="10" height="14" viewBox="0 0 10 14"><path d="M5 0c2.500 0 3.500 2 3.500 4.500 0 3 .5 4 1.500 5.500H0c1-1.500 1.500-2.500 1.500-5.500C1.500 2 2.500 0 5 0zM3.500 11h3a1.500 1.500 0 0 1-3 0z" fill="#c0c0c0"/></svg>
<div class="t" style="left:1843px;top:1020px">0</div>
<div class="t" style="left:1857px;top:1020px;color:#aaa">版本3.8.3</div>
</body></html>
